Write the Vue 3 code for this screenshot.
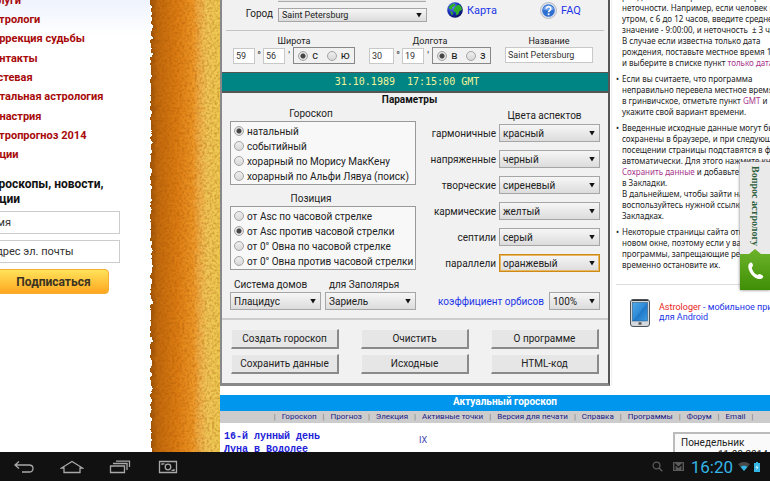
<script setup>
import { ref } from 'vue'

const menu = ['Услуги', 'Астрологи', 'Коррекция судьбы', 'Контакты', 'Гостевая', 'Натальная астрология', 'Синастрия', 'Астропрогноз 2014', 'Акции']

const kinds = ['натальный', 'событийный', 'хорарный по Морису МакКену', 'хорарный по Альфи Лявуа (поиск)']
const kind = ref(kinds[0])

const positions = ['от Asc по часовой стрелке', 'от Asc против часовой стрелки', 'от 0° Овна по часовой стрелке', 'от 0° Овна против часовой стрелки']
const position = ref(positions[1])

const aspects = [
  { id: 'harm', label: 'гармоничные', color: 'красный' },
  { id: 'tense', label: 'напряженные', color: 'черный' },
  { id: 'creative', label: 'творческие', color: 'сиреневый' },
  { id: 'karmic', label: 'кармические', color: 'желтый' },
  { id: 'septile', label: 'септили', color: 'серый' },
  { id: 'parallel', label: 'параллели', color: 'оранжевый', active: true },
]

const actions = ['Создать гороскоп', 'Очистить', 'О программе', 'Сохранить данные', 'Исходные', 'HTML-код']
const links = ['Гороскоп', 'Прогноз', 'Элекция', 'Активные точки', 'Версия для печати', 'Справка', 'Программы', 'Форум', 'Email']

const lat = ref('с')
const lon = ref('в')
</script>

<template>
  <div class="screen">
    <div class="page">
      <aside class="sidebar">
        <nav class="menu">
          <a v-for="m in menu" :key="m" href="#">{{ m }}</a>
        </nav>
        <form class="subscribe" @submit.prevent>
          <h3>Гороскопы, новости,<br>акции</h3>
          <input class="field" type="text" value="Имя" aria-label="Имя">
          <input class="field" type="text" value="Адрес эл. почты" aria-label="Адрес эл. почты">
          <button class="gold" type="submit">Подписаться</button>
        </form>
      </aside>

      <svg class="parchment" aria-hidden="true">
        <defs>
          <linearGradient id="paper" x1="0" x2="1" y1="0" y2="0">
            <stop offset="0" stop-color="#9c5208" />
            <stop offset="0.08" stop-color="#c0680c" />
            <stop offset="0.35" stop-color="#dc7c12" />
            <stop offset="0.56" stop-color="#ec9424" />
            <stop offset="0.66" stop-color="#efb048" />
            <stop offset="0.76" stop-color="#f0c657" />
            <stop offset="1" stop-color="#eecb50" />
          </linearGradient>
          <filter id="torn" x="-5%" y="0" width="110%" height="100%" color-interpolation-filters="sRGB">
            <feTurbulence type="fractalNoise" baseFrequency="0.16" numOctaves="3" seed="4" result="n" />
            <feDisplacementMap in="SourceGraphic" in2="n" scale="6" xChannelSelector="R" yChannelSelector="G" />
          </filter>
          <filter id="grain" x="0" y="0" width="100%" height="100%" color-interpolation-filters="sRGB">
            <feTurbulence type="fractalNoise" baseFrequency="0.4" numOctaves="2" seed="9" />
            <feColorMatrix values="0 0 0 0 0.6  0 0 0 0 0.3  0 0 0 0 0  0.9 0 0 0 -0.36" />
          </filter>
        </defs>
        <rect x="1" y="-10" width="74" height="110%" fill="url(#paper)" filter="url(#torn)" />
        <rect x="3" y="0" width="70" height="100%" filter="url(#grain)" />
      </svg>

      <main class="main">
        <div class="top">
          <form class="panel" @submit.prevent>
            <section class="place">
              <div class="stub"></div>
              <div class="city-row">
                <label for="city">Город</label>
                <span class="pick city">
                  <select id="city"><option>Saint Petersburg</option></select>
                </span>
                <a class="tool map" href="#">
                  <svg width="16" height="16" viewBox="0 0 16 16">
                    <defs>
                      <radialGradient id="sea" cx="0.35" cy="0.3" r="0.8">
                        <stop offset="0" stop-color="#6a8cff" /><stop offset="0.5" stop-color="#1a2fc0" /><stop offset="1" stop-color="#050a48" />
                      </radialGradient>
                    </defs>
                    <circle cx="8" cy="8" r="7.8" fill="url(#sea)" />
                    <path d="M3 3.5 6 1.5 8.5 2 7.5 4 5.5 5 5 7.5 2.5 7 1.5 5.5Z M9 4 12 2.500 14.500 5 15 8 12.500 9 11.500 12 9.500 13.500 8.500 10 6.500 9 7 6.500Z M3 9 5.500 10 6 12.500 4.500 13Z" fill="#2fae2a" />
                  </svg>
                  Карта
                </a>
                <a class="tool faq" href="#">
                  <svg width="17" height="17" viewBox="0 0 17 17">
                    <circle cx="8.500" cy="8.500" r="8" fill="#dfe3ea" stroke="#b4bac6" />
                    <circle cx="8.500" cy="8.500" r="6.300" fill="#2f6fd0" />
                    <path d="M3 7.500a5.600 5 0 0 1 11 0Q8.500 9.500 3 7.500Z" fill="#6fa2ea" />
                    <path d="M6.300 6.700C6.300 3.900 10.900 4 10.800 6.700 10.800 8.300 8.600 8.300 8.600 10.200" fill="none" stroke="#fff" stroke-width="1.600" />
                    <circle cx="8.600" cy="12.300" r="1" fill="#fff" />
                  </svg>
                  FAQ
                </a>
              </div>
              <div class="rule"></div>
              <div class="coords">
                <fieldset class="coord">
                  <legend>Широта</legend>
                  <div class="coord-row">
                    <input class="num" type="text" value="59" aria-label="Широта, градусы"><i>°</i>
                    <input class="num" type="text" value="56" aria-label="Широта, минуты"><i>'</i>
                    <span class="pair">
                      <label v-for="v in ['с', 'ю']" :key="v"><input v-model="lat" type="radio" name="lat" :value="v"><span>{{ v }}</span></label>
                    </span>
                  </div>
                </fieldset>
                <fieldset class="coord">
                  <legend>Долгота</legend>
                  <div class="coord-row">
                    <input class="num wide" type="text" value="30" aria-label="Долгота, градусы"><i>°</i>
                    <input class="num" type="text" value="19" aria-label="Долгота, минуты"><i>'</i>
                    <span class="pair">
                      <label v-for="v in ['в', 'з']" :key="v"><input v-model="lon" type="radio" name="lon" :value="v"><span>{{ v }}</span></label>
                    </span>
                  </div>
                </fieldset>
                <div class="coord name">
                  <label for="title">Название</label>
                  <input id="title" class="num title" type="text" value="Saint Petersburg">
                </div>
              </div>
            </section>

            <div class="stamp">31.10.1989&nbsp; 17:15:00 GMT</div>

            <section class="params">
              <h2>Параметры</h2>
              <div class="columns">
                <div class="left">
                  <fieldset>
                    <legend>Гороскоп</legend>
                    <div class="choices">
                      <label v-for="k in kinds" :key="k"><input v-model="kind" type="radio" name="kind" :value="k"><span>{{ k }}</span></label>
                    </div>
                  </fieldset>
                  <fieldset>
                    <legend>Позиция</legend>
                    <div class="choices">
                      <label v-for="p in positions" :key="p"><input v-model="position" type="radio" name="position" :value="p"><span>{{ p }}</span></label>
                    </div>
                  </fieldset>
                </div>
                <div class="right">
                  <h3>Цвета аспектов</h3>
                  <div v-for="a in aspects" :key="a.id" class="aspect">
                    <label :for="a.id">{{ a.label }}</label>
                    <span class="pick" :class="{ active: a.active }">
                      <select :id="a.id"><option>{{ a.color }}</option></select>
                    </span>
                  </div>
                </div>
              </div>
              <div class="houses">
                <div class="house">
                  <label for="system">Система домов</label>
                  <span class="pick"><select id="system"><option>Плацидус</option></select></span>
                </div>
                <div class="house">
                  <label for="polar">для Заполярья</label>
                  <span class="pick"><select id="polar"><option>Зариель</option></select></span>
                </div>
                <div class="orb">
                  <label for="orb">коэффициент орбисов</label>
                  <span class="pick"><select id="orb"><option>100%</option></select></span>
                </div>
              </div>
            </section>

            <div class="actions">
              <button v-for="a in actions" :key="a" type="button">{{ a }}</button>
            </div>
          </form>

          <aside class="notes">
            <ul>
              <li>
                рождения и выберите в списке вариант<br>
                неточности. Например, если человек родился<br>
                утром, с 6 до 12 часов, введите среднее<br>
                значение - 9:00:00, и неточность&nbsp; ± 3 часа.<br>
                В случае если известна только дата<br>
                рождения, поставьте местное время 12:00:00<br>
                и выберите в списке пункт <a href="#">только дата</a>.
              </li>
              <li>
                Если вы считаете, что программа<br>
                неправильно перевела местное время<br>
                в гринвичское, отметьте пункт <a href="#">GMT</a> и<br>
                укажите свой вариант времени.
              </li>
              <li>
                Введенные исходные данные могут быть<br>
                сохранены в браузере, и при следующем<br>
                посещении страницы подставятся в форму<br>
                автоматически. Для этого нажмите кнопку<br>
                <a href="#">Сохранить данные</a> и добавьте страницу<br>
                в Закладки.<br>
                В дальнейшем, чтобы зайти на страницу,<br>
                воспользуйтесь нужной ссылкой в<br>
                Закладках.
              </li>
              <li>
                Некоторые страницы сайта открываются в<br>
                новом окне, поэтому если у вас стоят<br>
                программы, запрещающие рекламу,<br>
                временно остановите их.
              </li>
            </ul>
            <a class="app" href="#">
              <svg width="20" height="28" viewBox="0 0 20 28">
                <defs>
                  <linearGradient id="glass" x1="0" y1="0" x2="1" y2="1">
                    <stop offset="0" stop-color="#4fa8e8" /><stop offset="0.5" stop-color="#2f8ad8" /><stop offset="0.52" stop-color="#1f78c8" /><stop offset="1" stop-color="#3f9ce4" />
                  </linearGradient>
                </defs>
                <rect x="0.500" y="0.500" width="19" height="27" rx="2.500" fill="#d4d8dc" stroke="#4c5258" />
                <path d="M2 1.500h16" stroke="#333" />
                <rect x="2.500" y="3.500" width="15" height="18.500" fill="url(#glass)" stroke="#2b5d86" stroke-width="0.600" />
                <rect x="8.500" y="23.300" width="3" height="2.400" fill="#555" />
              </svg>
              <span><b>Astrologer</b> - мобильное приложение<br>для Android</span>
            </a>
          </aside>
        </div>

        <section class="actual">
          <h2>Актуальный гороскоп</h2>
          <nav class="links">
            <template v-for="l in links" :key="l"><i>|</i><a href="#">{{ l }}</a></template><i>|</i>
          </nav>
          <div class="chart">
            <pre>16-й лунный день
Луна в Водолее</pre>
            <span class="house-mark">IX</span>
            <div class="today">Понедельник<br><span>11 08 2014</span></div>
          </div>
        </section>
      </main>

      <a class="ask" href="#">
        <span class="ask-text">Вопрос астрологу</span>
        <svg width="30" height="41" viewBox="0 0 30 41">
          <defs>
            <linearGradient id="leaf" x1="0" y1="0" x2="0" y2="1">
              <stop offset="0" stop-color="#6db32a" /><stop offset="1" stop-color="#3f8f06" />
            </linearGradient>
          </defs>
          <path d="M0 5H9L15 0 21 5H31V41H0Z" fill="url(#leaf)" />
          <path d="M10.500 13.500C12 13 13 15 13 17 12 18 11.500 18.300 12.300 20.500 13.500 23.500 15.500 25.500 17.500 26 19 24.800 20 24.800 21.500 25.800 24 27.200 23.500 28.300 22 29.500 18 31.500 13 28 10.500 24 7.500 19 7.500 15 10.500 13.500Z" fill="#fff" />
        </svg>
      </a>
    </div>

    <footer class="system">
      <button type="button" aria-label="Назад">
        <svg width="22" height="14" viewBox="0 0 22 14"><path d="M6 1.500 2 5l4 3.500M2.500 5H16q4 0 4 3.500T16 12H9" /></svg>
      </button>
      <button type="button" aria-label="Домой">
        <svg width="24" height="14" viewBox="0 0 24 14"><path d="M1.500 8 12 1.500 22.500 8H20v4.500H4V8Z" /></svg>
      </button>
      <button type="button" aria-label="Недавние">
        <svg width="22" height="14" viewBox="0 0 22 14"><path d="M1.500 6h14v6.500h-14ZM4 3.500h14V10M7 1.200h13.500V7" /></svg>
      </button>
      <button type="button" aria-label="Снимок экрана">
        <svg width="20" height="14" viewBox="0 0 20 14"><path d="M1.500 1.500h17v11h-17ZM4 5V3.800h2.500M16 9v1.300h-2.500" /><circle cx="10" cy="7" r="2.800" /></svg>
      </button>
      <div class="status">
        <svg width="11" height="11" viewBox="0 0 11 11"><circle cx="4.500" cy="4.500" r="3.400" fill="none" stroke="#5a5a5a" stroke-width="1.300" /><path d="M7 7l3.300 3.300" stroke="#5a5a5a" stroke-width="1.500" /></svg>
        <svg class="mail" width="11" height="9" viewBox="0 0 11 9"><rect width="11" height="9" fill="#5a5a5a" /><path d="M2 8V2l3.500 3.500L9 2v6" fill="none" stroke="#151515" stroke-width="1.200" /></svg>
        <time>16:20</time>
        <svg class="wifi" width="12" height="9" viewBox="0 0 12 9"><path d="M0 2Q6-2 12 2L6 9Z" fill="#4a4a4a" /><path d="M2.500 4.800Q6 2.600 9.500 4.800L6 9Z" fill="#33b5e5" /></svg>
        <svg width="6" height="10" viewBox="0 0 6 10"><path d="M2 0h2v1h2v9H0V1h2Z" fill="#33b5e5" /><path d="M3.500 2.500 1.500 5.800h1.300L2.500 8.300l2-3.300H3.200Z" fill="#dff4fc" /></svg>
      </div>
    </footer>
  </div>
</template>

<style>
body {
  background: #fff;
  font-family: Roboto, "Liberation Sans", sans-serif;
  overflow: hidden;
}
</style>

<style scoped>
* { box-sizing: border-box; }
h2, h3, ul, pre, fieldset { margin: 0; padding: 0; }
fieldset { border: 0; min-width: 0; }
a { text-decoration: none; }
input, select, button { font-family: inherit; margin: 0; border-radius: 0; outline: none; }

.screen { height: 100vh; display: flex; flex-direction: column; font-size: 10px; color: #222; }
.page { flex: 1; min-height: 0; display: flex; position: relative; overflow: hidden; }

.sidebar { flex: 0 0 150px; overflow: hidden; background: linear-gradient(#eef3fd, #fff 36px); }
.menu { margin: -9px 0 0 -14px; display: flex; flex-direction: column; }
.menu a { font-weight: 700; font-size: 11px; line-height: 19px; height: 19px; color: #a80a0a; white-space: nowrap; }
.menu a:nth-child(3n) { margin-bottom: 1px; }
.subscribe { display: flex; flex-direction: column; align-items: flex-start; margin: 12px 0 0 -14px; }
.subscribe h3 { font-size: 12px; line-height: 15px; color: #111; white-space: nowrap; margin-bottom: 4px; }
.field { width: 134px; height: 23px; border: 1px solid #ccc; font-size: 11px; color: #333; padding: 0 2px; margin-bottom: 6px; background: #fff; }
.gold {
  width: 113px; height: 25px; margin-left: 10px; padding: 0 0 0 2px; border: 1px solid #f5ae2e; border-radius: 4px;
  background: linear-gradient(#ffe35a, #ffa620); font-weight: 700; font-size: 12px; color: #3a3322;
}

.parchment { flex: 0 0 70px; width: 70px; height: 100%; }
.main { flex: 1; min-width: 0; display: flex; flex-direction: column; }
.top { display: flex; }

.panel { flex: 0 0 390px; border: 2px solid #888; border-top: 0; border-right-color: #555; border-bottom: 3px solid #888; background: #f1f1f1; }
.place { padding: 0 4px; height: 72px; }
.stub { height: 2px; width: 148px; margin-left: 52px; background: #e4e4e4; border-bottom: 1px solid #aaa; }
.city-row { display: flex; align-items: flex-start; height: 21px; }
.city-row label { width: 52px; padding: 5px 5px 0 0; line-height: 14px; text-align: right; font-size: 10px; }
.city { width: 149px; margin-top: 6px; }
.tool { display: flex; align-items: center; gap: 4px; font-size: 11px; color: #1c36e8; height: 16px; }
.map { margin-left: 20px; }
.faq { margin-left: 43px; }
.rule { height: 1px; background: #c4c4c4; margin-top: 7px; }
.coords { display: flex; justify-content: space-between; padding: 4px 11px 0 7px; }
.coord legend, .name label { display: block; font-size: 9px; line-height: 12px; text-align: center; }
.coord { width: 122px; }
.coord legend { width: 100%; }
.coord-row { display: flex; align-items: center; }
.coord-row i { font-style: normal; font-size: 10px; line-height: 16px; width: 8px; text-align: center; }
.num { width: 22px; height: 16px; border: 1px solid #c8c8c8; background: #fff; font-size: 9px; padding: 0 2px; color: #333; }
.wide { width: 25px; }
.name { width: 88px; }
.title { width: 88px; }
.pair { flex: 1; height: 17px; display: flex; justify-content: space-around; align-items: center; border: 1px solid #888; }
.pair label { display: flex; align-items: center; gap: 4px; font-size: 11px; line-height: 16px; }

input[type="radio"] {
  appearance: none; flex: none; width: 10px; height: 10px; border: 1px solid #a4a4a4; border-radius: 50%;
  background: linear-gradient(#eee, #d8d8d8);
}
input[type="radio"]:checked { background: radial-gradient(circle, #444 2px, #e2e2e2 3px); }

.pick { display: grid; align-items: center; flex: none; }
.pick select {
  grid-area: 1 / 1; width: 100%; height: 18px; appearance: none; border: 1px solid #a6a6a6;
  background: linear-gradient(#f6f6f6, #dcdcdc); font-size: 10px; padding: 0 3px; color: #222;
}
.pick::after {
  content: ""; grid-area: 1 / 1; justify-self: end; width: 6px; height: 5px; margin-right: 5px; background: #111;
  clip-path: polygon(0 0, 100% 0, 50% 100%); pointer-events: none;
}
.pick.city select { height: 14px; font-size: 9px; }
.pick.active select { border: 1px solid #d08a18; box-shadow: 0 0 0 1px #e6b865 inset; }

.stamp {
  height: 21px; border-top: 1px solid #555; border-bottom: 2px solid #555; background: #008484; color: #f3f39a;
  font: 10px/17px "DejaVu Sans Mono", monospace; text-align: center; padding-right: 16px;
}

.params { padding: 0 8px 8px; border-bottom: 2px solid #ccc; }
.params h2 { font-size: 10px; line-height: 14px; text-align: center; color: #111; padding-right: 11px; }
.params h3 { font-weight: 400; font-size: 10px; line-height: 14px; padding: 2px 10px 1px 0; width: 101px; margin-left: auto; text-align: center; white-space: nowrap; }
.columns { display: flex; justify-content: space-between; }
.left { width: 186px; }
.left legend { font-size: 10px; line-height: 14px; width: 100%; padding: 0 24px 0 0; text-align: center; }
.choices { border: 1px solid #9a9a9a; background: #f8f8f8; height: 64px; padding: 1px 3px; margin-bottom: 7px; overflow: hidden; }
.choices label { display: flex; align-items: center; gap: 3px; height: 15px; line-height: 15px; font-size: 10px; white-space: nowrap; }
.choices label span { padding-top: 2px; }
.right { width: 170px; }
.aspect { display: flex; justify-content: flex-end; align-items: center; margin-bottom: 8px; }
.aspect:last-child { margin-bottom: 0; }
.aspect label { padding-right: 3px; }
.aspect .pick { width: 101px; }
.houses { display: flex; gap: 4px; align-items: flex-end; }
.house { width: 91px; }
.house label { display: block; line-height: 15px; padding-left: 4px; white-space: nowrap; }
.orb { flex: 1; display: flex; align-items: center; justify-content: flex-end; gap: 5px; color: #1c36e8; }
.orb .pick { width: 51px; }

.actions { display: grid; grid-template-columns: repeat(3, 108px); justify-content: space-between; gap: 5px; padding: 9px 9px 9px; }
.actions button {
  height: 20px; padding: 0; font-size: 10px; color: #222; background: #e6e6e6;
  border: 1px solid #f2f2f2; border-right: 2px solid #8a8a8a; border-bottom: 2px solid #8a8a8a;
}

.notes { flex: 1; min-width: 0; overflow: hidden; margin-left: 1px; border-left: 1px solid #f0f0f0; }
.notes ul { list-style: none; margin: -9px 0 0 4px; border-bottom: 1px solid #ddd; padding-bottom: 9px; }
.notes li { font-family: "Noto Sans", Roboto, sans-serif; font-size: 8px; line-height: 11px; white-space: nowrap; padding-left: 6px; margin-bottom: 5px; position: relative; color: #222; }
.notes li::before { content: "•"; position: absolute; left: 0; }
.notes li a { color: #a8358c; }
.app { display: flex; gap: 9px; padding: 14px 0 0 18px; font-size: 9px; line-height: 10px; color: #1c36e8; white-space: nowrap; }
.app svg { flex: none; }
.app span { padding-top: 3px; }
.app b { font-weight: 400; color: #e81c1c; }

.actual { margin-top: 9px; }
.actual h2 { background: #0096ee; color: #fff; font-size: 10px; line-height: 14px; height: 16px; text-align: center; padding-right: 30px; padding-left: 50px; }
.links { background: #ccc; height: 12px; line-height: 11px; font-size: 8px; display: flex; justify-content: center; gap: 6px; color: #777; white-space: nowrap; padding-left: 37px; }
.links i { font-style: normal; }
.links a { color: #1a1a86; }
.chart { display: flex; align-items: flex-start; padding-top: 7px; }
.chart pre { font: 10px/13px "Liberation Mono", monospace; font-weight: 700; color: #2222d8; padding-left: 4px; }
.house-mark { font-size: 9px; color: #4444b0; padding: 5px 0 0 99px; }
.today { margin: 2px 0 0 auto; flex: 0 0 97px; min-width: 0; overflow: hidden; border: 2px solid #bbb; border-right: 0; background: #fafafa; font-size: 10px; line-height: 12px; padding: 3px 6px; white-space: nowrap; }
.today span { padding-left: 37px; }

.ask { position: absolute; right: 0; top: 162px; width: 30px; display: flex; flex-direction: column; background: #eaeaea; box-shadow: 0 0 3px #777; }
.ask-text { writing-mode: vertical-rl; height: 87px; padding-top: 4px; font: 700 10px/30px "Liberation Serif", serif; color: #2c5e3c; white-space: nowrap; }

.system { flex: 0 0 29px; background: #111; display: flex; align-items: center; padding: 0 10px 0 0; }
.system button { width: 48px; height: 29px; padding: 0; border: 0; background: none; display: flex; align-items: center; justify-content: center; }
.system button svg { fill: none; stroke: #a8a8a8; stroke-width: 1.3; }
.status { margin-left: auto; display: flex; align-items: center; }
.mail { margin-left: 10px; }
.status time { font-size: 17px; line-height: 20px; color: #33b5e5; margin: 0 5px 0 7px; }
.wifi { margin-right: 4px; }
</style>
